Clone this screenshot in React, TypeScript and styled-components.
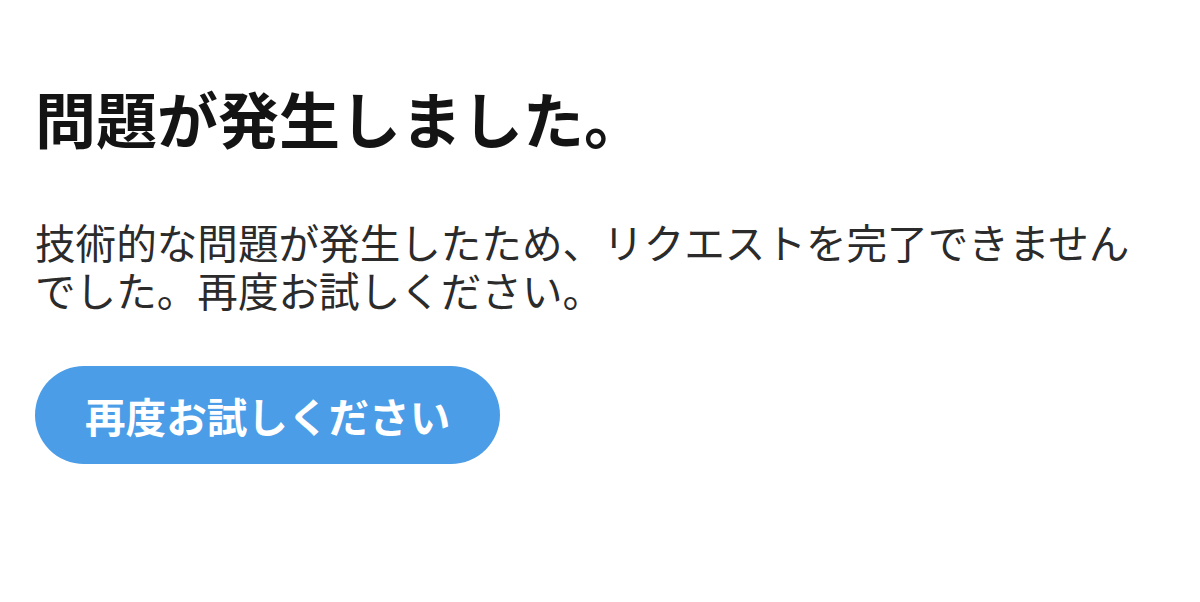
import React from 'react'
import styled, { createGlobalStyle } from 'styled-components'

const GlobalStyle = createGlobalStyle`
  html, body {
    margin: 0;
    padding: 0;
    background: #ffffff;
  }
  body {
    font-family: "Noto Sans CJK JP", "Noto Sans", sans-serif;
  }
`

const Page = styled.main`
  display: flex;
  flex-direction: column;
  align-items: flex-start;
  padding: 82px 35px 0 35px;
  width: 1200px;
  height: 602px;
  box-sizing: border-box;
`

const Title = styled.h1`
  margin: 0;
  font-size: 61px;
  line-height: 72px;
  font-weight: 700;
  color: #141414;
`

const Message = styled.p`
  margin: 64px 0 0 0;
  max-width: 1120px;
  font-size: 40.6px;
  line-height: 48px;
  font-weight: 400;
  color: #2b2b2b;
`

const RetryButton = styled.button`
  margin-top: 52px;
  display: inline-flex;
  align-items: center;
  justify-content: center;
  height: 98px;
  padding: 0 50px;
  border: none;
  border-radius: 999px;
  background: #4a9de6;
  color: #ffffff;
  font-family: inherit;
  font-size: 40.6px;
  font-weight: 700;
  cursor: pointer;
`

export default function App() {
  return (
    <>
      <GlobalStyle />
      <Page>
        <Title>問題が発生しました。</Title>
        <Message>
          技術的な問題が発生したため、リクエストを完了できませんでした。再度お試しください。
        </Message>
        <RetryButton>再度お試しください</RetryButton>
      </Page>
    </>
  )
}
